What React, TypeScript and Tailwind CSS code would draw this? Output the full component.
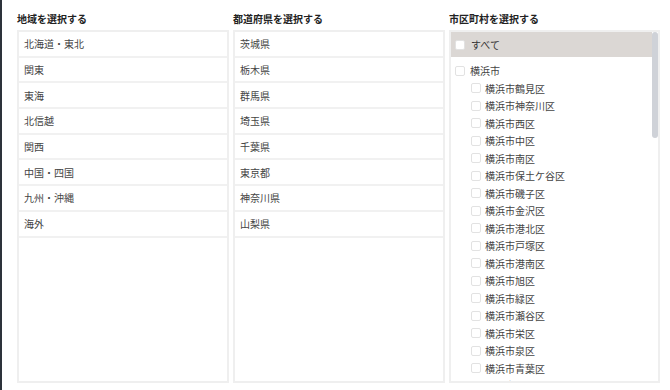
import React from 'react';

const regions = ['北海道・東北', '関東', '東海', '北信越', '関西', '中国・四国', '九州・沖縄', '海外'];
const prefectures = ['茨城県', '栃木県', '群馬県', '埼玉県', '千葉県', '東京都', '神奈川県', '山梨県'];

// only the part of the list that is visible in the scroll box
const wards = ['鶴見区', '神奈川区', '西区', '中区', '南区', '保土ケ谷区', '磯子区', '金沢区', '港北区', '戸塚区', '港南区', '旭区', '緑区', '瀬谷区', '栄区', '泉区', '青葉区', '都筑区'];

const Check = () => (
  <span className="w-[10px] h-[10px] shrink-0 rounded-[2px] border border-[#e2e2e2] bg-white" />
);

const Heading = ({ children }: { children: React.ReactNode }) => (
  <h2 className="text-[10px] leading-[14px] font-bold text-[#222] mb-[4px]">{children}</h2>
);

const SimpleList = ({ title, items }: { title: string; items: string[] }) => (
  <div className="flex flex-col">
    <Heading>{title}</Heading>
    <div className="h-[353px] border-2 border-[#efefef] bg-white">
      {items.map(item => (
        <div
          key={item}
          className="h-[25.7px] flex items-center px-[5px] border-b-2 border-[#f1f1f1] text-[10px] text-[#444]"
        >
          {item}
        </div>
      ))}
    </div>
  </div>
);

export default function App() {
  return (
    <div className="flex w-[670px] h-[390px] bg-white font-['Noto_Sans_CJK_JP','Noto_Sans',sans-serif] overflow-hidden">
      <div className="w-[2px] shrink-0 bg-[#2d333b]" />
      <div className="grid grid-cols-[212px_212px_211px] gap-[4px] pl-[15px] pt-[12px]">
        <SimpleList title="地域を選択する" items={regions} />
        <SimpleList title="都道府県を選択する" items={prefectures} />
        <div className="flex flex-col">
          <Heading>市区町村を選択する</Heading>
          <div className="relative h-[353px] border-2 border-[#efefef] bg-white overflow-hidden">
            <div className="h-[25px] flex items-center gap-[6px] pl-[4px] bg-[#dbd7d4] text-[10px] text-[#333]">
              <Check />
              <span>すべて</span>
            </div>
            <div className="pt-[5px] text-[10px] text-[#444]">
              <div className="h-[17.5px] flex items-center gap-[5px] pl-[4px]">
                <Check />
                <span>横浜市</span>
              </div>
              {wards.map(w => (
                <div key={w} className="h-[17.5px] flex items-center gap-[4px] pl-[20px]">
                  <Check />
                  <span>横浜市{w}</span>
                </div>
              ))}
            </div>
            {/* scrollbar thumb */}
            <div className="absolute right-0 top-0 w-[6px] h-full bg-white">
              <div className="w-full h-[106px] rounded-[3px] bg-[#cfd2d8]" />
            </div>
          </div>
        </div>
      </div>
    </div>
  );
}
